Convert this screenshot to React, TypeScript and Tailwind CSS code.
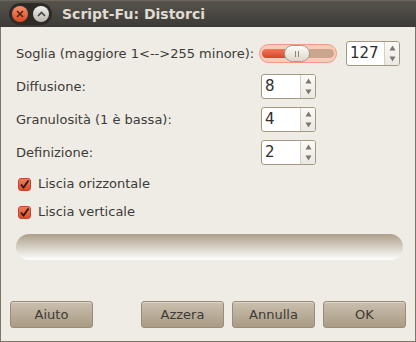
import { useState } from 'react'

const font = { fontFamily: '"DejaVu Sans", "Noto Sans", sans-serif' }

const SpinBox = ({ value, w }: { value: string; w: string }) => (
    <div className={`flex h-[25px] ${w} rounded-[3px] border border-[#a39882] bg-white overflow-hidden`}>
        <div className="flex flex-1 items-center pl-[3px] text-[15px] text-[#2e2d2a]">{value}</div>
        <div className="flex w-[15px] flex-col items-center justify-between border-l border-[#d6d0c4] bg-gradient-to-b from-[#fbfaf8] to-[#ece8e1] py-[3px]">
            <svg width="7" height="6" viewBox="0 0 7 6"><path d="M3.5 0.5 L6.5 5.5 L0.5 5.5 Z" fill="#7b776f" /></svg>
            <svg width="7" height="6" viewBox="0 0 7 6"><path d="M0.5 0.5 L6.5 0.5 L3.5 5.5 Z" fill="#7b776f" /></svg>
        </div>
    </div>
)

const CheckBox = ({ label }: { label: string }) => (
    <div className="flex h-[20px] items-center gap-[7px] pl-[2px]">
        <div className="flex h-[13px] w-[13px] items-center justify-center rounded-[3px] border border-[#c9452a] bg-gradient-to-b from-[#f27a5c] to-[#de4a2b]">
            <svg width="11" height="11" viewBox="0 0 11 11">
                <path d="M2 5.5 L4.5 8.5 L9.5 1.5" stroke="#2b1a14" strokeWidth="1.9" fill="none" />
            </svg>
        </div>
        <span>{label}</span>
    </div>
)

const Btn = ({ label }: { label: string }) => (
    <button className="flex h-[27px] w-[83px] items-center justify-center rounded-[3px] border border-[#9a8d78] bg-gradient-to-b from-[#cbc0ae] to-[#a99b85] text-[#3c3b37] shadow-[inset_0_1px_0_rgba(255,255,255,0.35)]">
        {label}
    </button>
)

export default function App() {
    const [h] = useState(true)
    const [v] = useState(true)
    return (
        <div className="flex h-[342px] w-[416px] flex-col bg-[#3c3b37] text-[13px] text-[#3c3b37]" style={font}>
            {/* Title bar */}
            <div className="flex h-[27px] items-center border-t border-[#6d665a] bg-gradient-to-b from-[#57534c] to-[#3c3b37]">
                <div className="ml-[9px] flex h-[22px] items-center gap-[5px] rounded-full bg-[#2c2b28] px-[3px]">
                    <div className="flex h-[16px] w-[16px] items-center justify-center rounded-full bg-gradient-to-b from-[#f6906a] to-[#d8481c]">
                        <svg width="8" height="8" viewBox="0 0 8 8">
                            <path d="M1 1 L7 7 M7 1 L1 7" stroke="#4a2516" strokeWidth="1.6" />
                        </svg>
                    </div>
                    <div className="flex h-[16px] w-[16px] items-center justify-center rounded-full bg-gradient-to-b from-[#f3f2ef] to-[#b9b5ad]">
                        <svg width="9" height="6" viewBox="0 0 9 6">
                            <path d="M1 5 L4.5 1.5 L8 5" stroke="#45433e" strokeWidth="1.6" fill="none" />
                        </svg>
                    </div>
                </div>
                <span className="ml-[10px] text-[14px] font-bold text-[#dfdbd2]">Script-Fu: Distorci</span>
            </div>

            {/* Body */}
            <div className="flex flex-1 flex-col border-x border-b border-[#7f7564] bg-[#efebe5] px-[15px] pt-[14px]">
                <div className="flex flex-col gap-[8px]">
                    <div className="flex h-[25px] items-center">
                        <span className="w-[244px]">Soglia (maggiore 1&lt;--&gt;255 minore):</span>
                        <div className="flex h-[19px] w-[78px] items-center rounded-full border border-[#f29a82] bg-[#f8cbbb] px-[2px]">
                            <div className="relative flex h-[9px] flex-1 items-center rounded-full bg-[#c9a78e]">
                                <div className="h-full w-[30px] rounded-l-full bg-gradient-to-b from-[#f0765a] to-[#d94424]" />
                                <div className="absolute left-[22px] top-[-4px] flex h-[17px] w-[26px] items-center justify-center gap-[2px] rounded-full border border-[#a79d8c] bg-gradient-to-b from-[#fdfcfa] to-[#ddd6ca]">
                                    <div className="h-[6px] w-[1px] bg-[#8d8578]" />
                                    <div className="h-[6px] w-[1px] bg-[#8d8578]" />
                                </div>
                            </div>
                        </div>
                        <div className="ml-[9px]">
                            <SpinBox value="127" w="w-[54px]" />
                        </div>
                    </div>
                    <div className="flex h-[25px] items-center">
                        <span className="w-[245px]">Diffusione:</span>
                        <SpinBox value="8" w="w-[55px]" />
                    </div>
                    <div className="flex h-[25px] items-center">
                        <span className="w-[245px]">Granulosità (1 è bassa):</span>
                        <SpinBox value="4" w="w-[55px]" />
                    </div>
                    <div className="flex h-[25px] items-center">
                        <span className="w-[245px]">Definizione:</span>
                        <SpinBox value="2" w="w-[55px]" />
                    </div>
                </div>

                <div className="mt-[9px] flex flex-col gap-[8px]">
                    {h && <CheckBox label="Liscia orizzontale" />}
                    {v && <CheckBox label="Liscia verticale" />}
                </div>

                <div className="mt-[12px] h-[26px] w-[387px] rounded-full bg-gradient-to-b from-[#ada08b] to-[#ffffff]" />

                <div className="mt-auto mb-[13px] flex items-center">
                    <div className="-ml-[6px]">
                        <Btn label="Aiuto" />
                    </div>
                    <div className="ml-auto -mr-[6px] flex gap-[8px]">
                        <Btn label="Azzera" />
                        <Btn label="Annulla" />
                        <Btn label="OK" />
                    </div>
                </div>
            </div>
        </div>
    )
}
